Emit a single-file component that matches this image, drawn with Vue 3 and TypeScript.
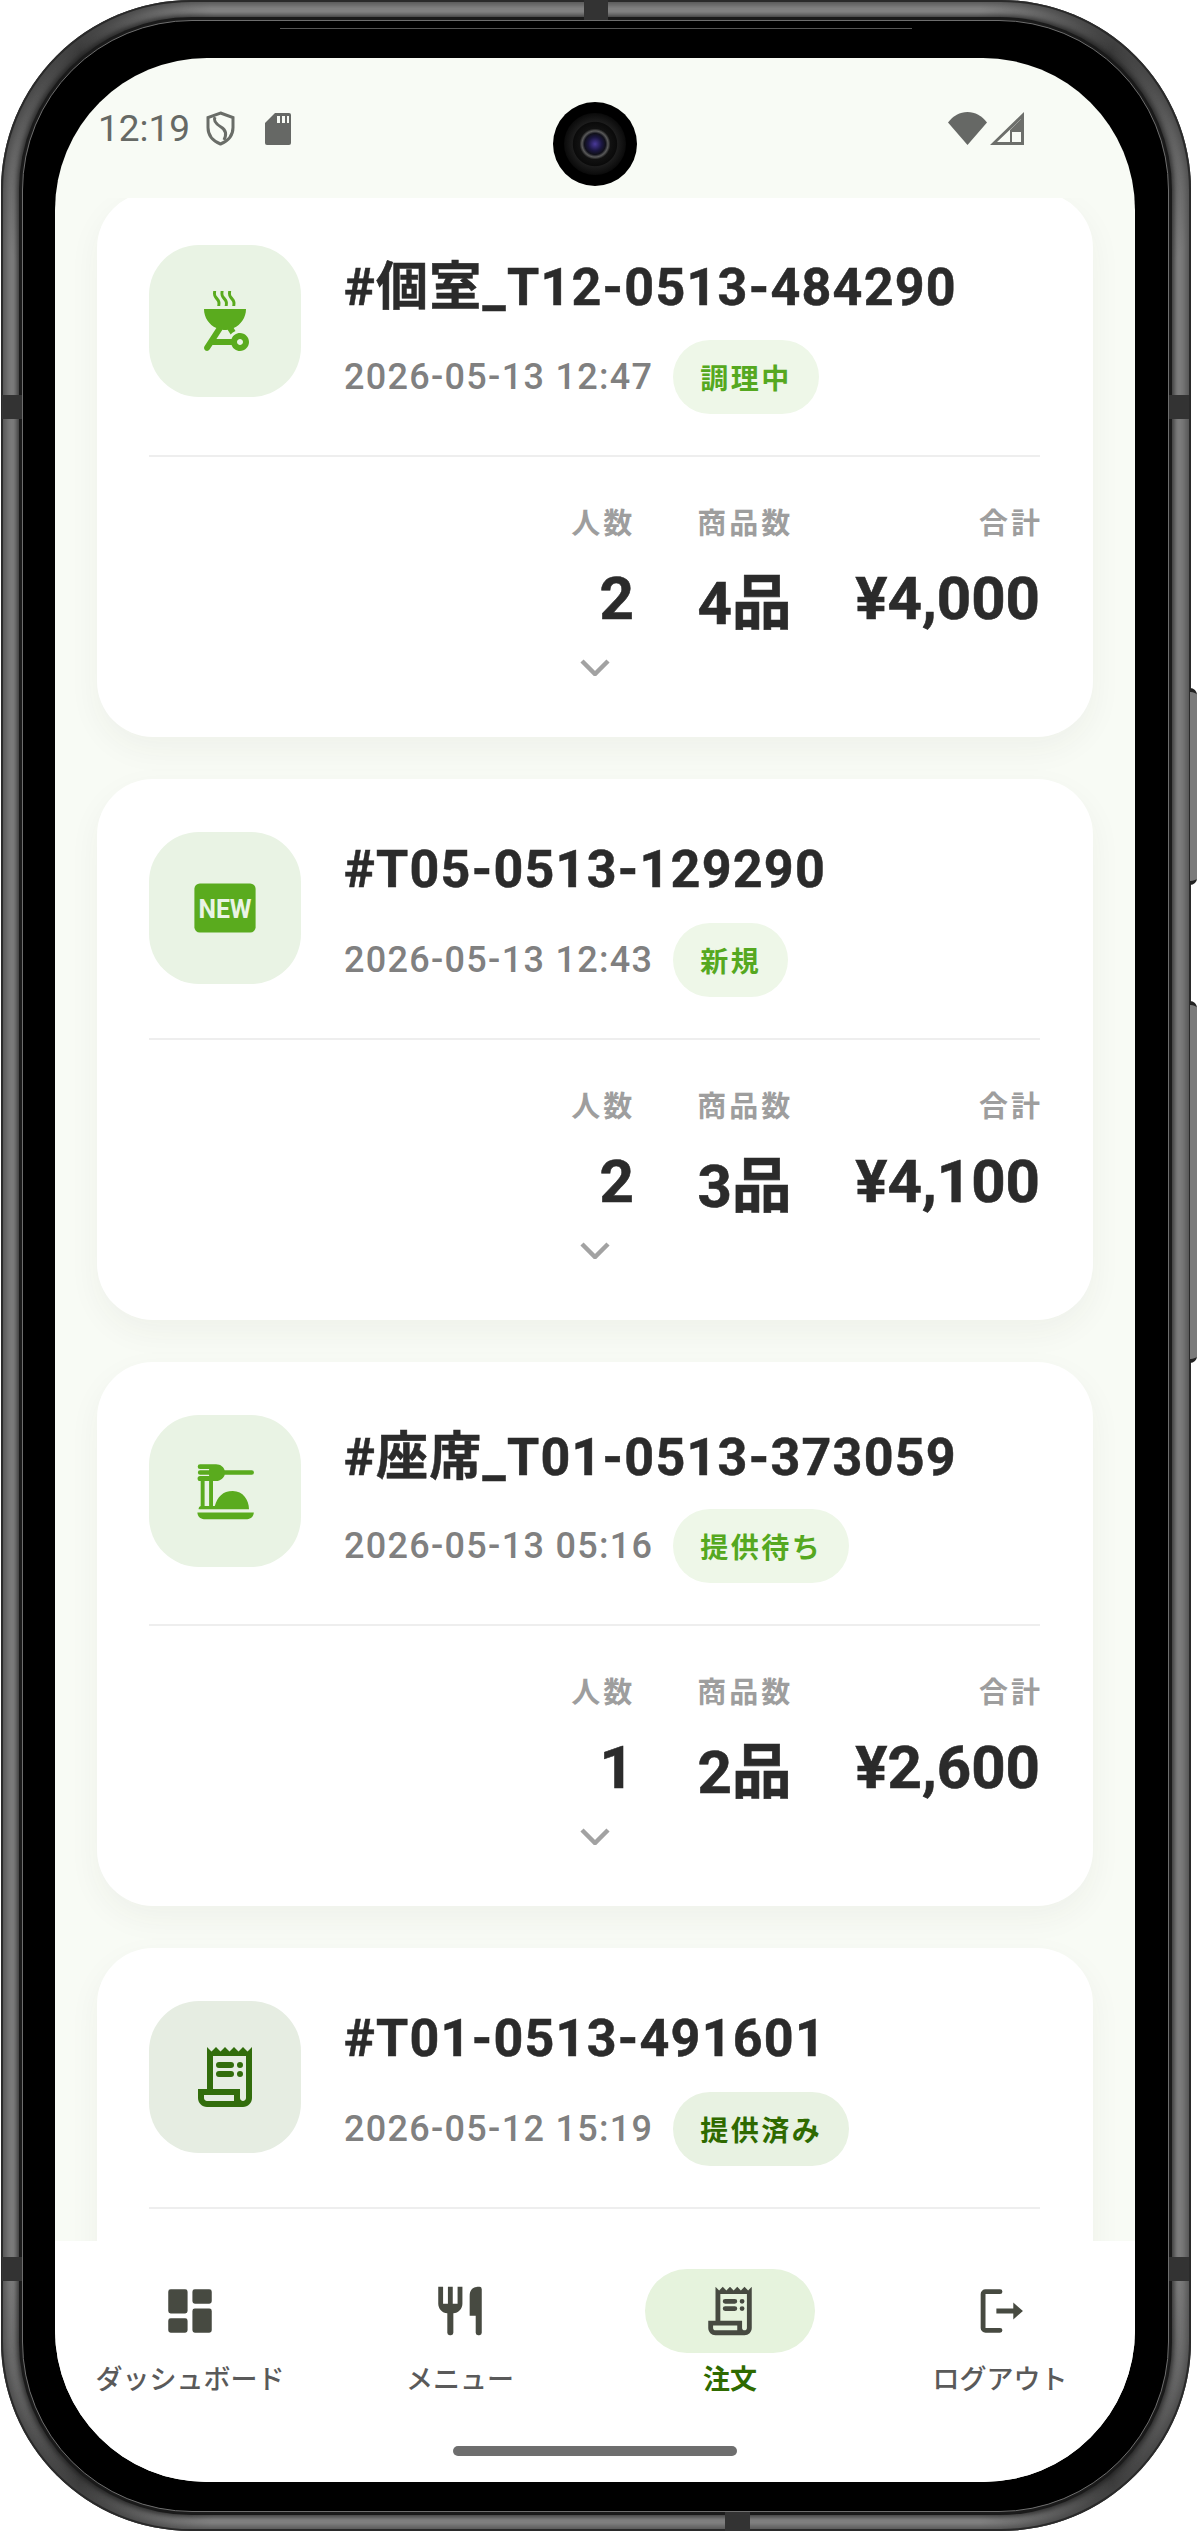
<template>
  <div class="device">
    <div class="side-btn btn-top"></div>
    <div class="side-btn btn-bottom"></div>
    <div class="mark mark-top"></div>
    <div class="mark mark-bottom"></div>
    <div class="mark mark-l1"></div>
    <div class="mark mark-l2"></div>
    <div class="mark mark-r1"></div>
    <div class="mark mark-r2"></div>
    <div class="speaker"></div>

    <div class="frame">
      <div class="bezel">
        <div class="screen">
          <header class="status">
            <div class="status-left">
              <span class="clock">12:19</span>
              <svg class="shield" viewBox="0 0 29 35">
                <path d="M14.5 2 27 6.5v10c0 8-5 13.500-12.500 16.500C7 30 2 24.500 2 16.500v-10z" fill="none" stroke="#6a6d68" stroke-width="3" />
                <path d="M9 6c-2 4 1 7 6 10s6 7 3 13" fill="none" stroke="#6a6d68" stroke-width="3" />
              </svg>
              <svg class="sd" viewBox="0 0 26 32">
                <path d="M10 0h14a2 2 0 0 1 2 2v28a2 2 0 0 1-2 2H2a2 2 0 0 1-2-2V10z" fill="#666865" />
                <path d="M12 3h3v7h-3zM17 3h3v7h-3zM22 3h2v7h-2z" fill="#f8fbf5" />
              </svg>
            </div>
            <div class="camera"><div class="lens"></div></div>
            <div class="status-right">
              <svg class="wifi" viewBox="0 0 39 33">
                <path d="M0 10.500C5 4 12 0 19.500 0S34 4 39 10.500L19.500 33z" fill="#666865" />
              </svg>
              <svg class="signal" viewBox="0 0 34 33">
                <path d="M34 0v33H0zM31 7 7 30h24z" fill="#6d6f6b" />
                <path d="M20 18v12h11V7z" fill="#6d6f6b" />
                <path d="M22 20h9v10h-9z" fill="#f8fbf5" />
              </svg>
            </div>
          </header>

          <main class="list">
            <div class="list-inner">
              <section v-for="o in orders" :key="o.id" class="card" :class="{ tall: o.tall }">
                <div class="card-head">
                  <div class="icon-box" :class="{ served: o.served }">
                    <svg class="order-icon" viewBox="0 0 24 24">
                      <template v-if="o.icon === 'new'">
                        <rect x="1.800" y="3.800" width="20.400" height="16.400" rx="1.800" fill="currentColor" />
                        <text x="12" y="15.300" text-anchor="middle" textLength="17.700" lengthAdjust="spacingAndGlyphs" class="new-text">NEW</text>
                      </template>
                      <path v-else :d="icons[o.icon]" fill="currentColor" fill-rule="evenodd" />
                    </svg>
                  </div>
                  <div class="head-text">
                    <h2 class="title">{{ o.id }}</h2>
                    <div class="meta">
                      <span class="date">{{ o.date }}</span>
                      <span class="chip" :class="{ served: o.served }">{{ o.status }}</span>
                    </div>
                  </div>
                </div>
                <div class="divider"></div>
                <template v-if="o.total">
                  <div class="stats">
                    <div class="stat">
                      <span class="label">人数</span>
                      <span class="value">{{ o.people }}</span>
                    </div>
                    <div class="stat">
                      <span class="label">商品数</span>
                      <span class="value count">{{ o.items }}</span>
                    </div>
                    <div class="stat">
                      <span class="label">合計</span>
                      <span class="value">{{ o.total }}</span>
                    </div>
                  </div>
                  <svg class="chevron" viewBox="0 0 30 17">
                    <path d="M2 2l13 13L28 2" fill="none" stroke="#a2a2a2" stroke-width="4.500" />
                  </svg>
                </template>
              </section>
            </div>
          </main>

          <nav class="nav">
            <div v-for="n in navItems" :key="n.label" class="nav-item" :class="{ active: n.active }">
              <div class="nav-pill">
                <svg class="nav-icon" viewBox="0 0 24 24">
                  <path v-if="n.icon !== 'logout'" :d="icons[n.icon]" fill="currentColor" fill-rule="evenodd" />
                  <template v-else>
                    <path d="M12 4H6a1 1 0 0 0-1 1v14a1 1 0 0 0 1 1h6" fill="none" stroke="currentColor" stroke-width="2" stroke-linecap="round" />
                    <path d="M10.500 11h7V8.500l4 3.500-4 3.500V13h-7z" fill="currentColor" />
                  </template>
                </svg>
              </div>
              <span class="nav-label">{{ n.label }}</span>
            </div>
            <div class="home-bar"></div>
          </nav>
        </div>
      </div>
    </div>
  </div>
</template>

<script setup lang="ts">
interface Order {
  id: string
  date: string
  status: string
  icon: string
  people?: number
  items?: string
  total?: string
  tall?: boolean
  served?: boolean
}

const icons: Record<string, string> = {
  grill:
    'M17 22c1.66 0 3-1.34 3-3s-1.34-3-3-3c-1.3 0-2.4.84-2.82 2H9.14l1.99-3.06c.29.04.58.06.87.06s.58-.02.87-.06l1.02 1.57c.42-.53.96-.95 1.6-1.21l-.6-.93C17.31 13.27 19 10.84 19 8H5c0 2.84 1.69 5.27 4.12 6.37l-3.95 6.08c-.3.46-.17 1.08.29 1.38.46.3 1.08.17 1.38-.29l1-1.54h6.35c.41 1.16 1.51 2 2.81 2zm0-4c.55 0 1 .45 1 1s-.45 1-1 1-1-.45-1-1 .45-1 1-1zM9.41 7h1c.15-1.15.23-1.64-.89-2.96-.42-.5-.68-.77-.46-2.04h-.99c-.21 1.11.03 2.05.89 2.96.22.24.79.67.45 2.04zm2.48 0h1c.15-1.15.23-1.64-.89-2.96-.42-.5-.68-.78-.46-2.04h-.99c-.21 1.11.03 2.05.89 2.96.23.24.8.67.45 2.04zm2.52 0h1c.15-1.15.23-1.64-.89-2.96-.42-.5-.68-.78-.46-2.04h-.99c-.21 1.11.03 2.05.89 2.96.22.24.79.67.45 2.04z',
  dinner:
    'M2.800 19.200H21.600c0 1.200-1 2.200-2.200 2.200H5c-1.200 0-2.200-1-2.200-2.200zM3.200 18.100c0-.6.3-1 .7-1.100V8.700h1.300V17h1.500V8.700H8v8.300h.6C9.500 14 11.200 12 14.600 12 18 12 20 15 20 18.100zM3.700 3.100H9c1.600 0 2.600 1 2.900 2h9a.75.75 0 0 1 0 1.500h-9c-.3 1-1.300 2.100-2.900 2.100H3.700a.8.8 0 0 1 0-1.700H6.700V6.600H3.700a.75.75 0 0 1 0-1.500H6.700V4.700H3.700a.8.8 0 0 1 0-1.600z',
  receipt:
    'M19.500 3.500 18 2l-1.500 1.500L15 2l-1.500 1.500L12 2l-1.500 1.500L9 2 7.500 3.500 6 2v14H3v3c0 1.660 1.340 3 3 3h12c1.660 0 3-1.340 3-3V2zM15 20H6c-.55 0-1-.45-1-1v-1h10zM19 19c0 .55-.45 1-1 1s-1-.45-1-1v-3H8V5h11zM10 7h4a1 1 0 0 1 0 2h-4a1 1 0 0 1 0-2zM10 10h4a1 1 0 0 1 0 2h-4a1 1 0 0 1 0-2zM17 7a1 1 0 1 1 0 2 1 1 0 0 1 0-2zM17 10a1 1 0 1 1 0 2 1 1 0 0 1 0-2z',
  dashboard:
    'M4 3h6a1 1 0 0 1 1 1v8a1 1 0 0 1-1 1H4a1 1 0 0 1-1-1V4a1 1 0 0 1 1-1zM4 15h6a1 1 0 0 1 1 1v4a1 1 0 0 1-1 1H4a1 1 0 0 1-1-1v-4a1 1 0 0 1 1-1zM14 3h6a1 1 0 0 1 1 1v4a1 1 0 0 1-1 1h-6a1 1 0 0 1-1-1V4a1 1 0 0 1 1-1zM14 11h6a1 1 0 0 1 1 1v8a1 1 0 0 1-1 1h-6a1 1 0 0 1-1-1v-8a1 1 0 0 1 1-1z',
  menu:
    'M11 9H9V2H7v7H5V2H3v7c0 2.120 1.660 3.840 3.750 3.970V21a1 1 0 0 0 1 1h.5a1 1 0 0 0 1-1v-8.030C11.340 12.840 13 11.120 13 9V2h-2zM16 6v8h2.500v7a1 1 0 0 0 1 1h.5a1 1 0 0 0 1-1V3a1 1 0 0 0-1-1c-2.760 0-4 1.240-4 4z',
}

const orders: Order[] = [
  { id: '#個室_T12-0513-484290', date: '2026-05-13 12:47', status: '調理中', icon: 'grill', people: 2, items: '4品', total: '¥4,000', tall: true },
  { id: '#T05-0513-129290', date: '2026-05-13 12:43', status: '新規', icon: 'new', people: 2, items: '3品', total: '¥4,100' },
  { id: '#座席_T01-0513-373059', date: '2026-05-13 05:16', status: '提供待ち', icon: 'dinner', people: 1, items: '2品', total: '¥2,600', tall: true },
  { id: '#T01-0513-491601', date: '2026-05-12 15:19', status: '提供済み', icon: 'receipt', served: true },
]

const navItems = [
  { label: 'ダッシュボード', icon: 'dashboard' },
  { label: 'メニュー', icon: 'menu' },
  { label: '注文', icon: 'receipt', active: true },
  { label: 'ログアウト', icon: 'logout' },
]
</script>

<style>
body {
  background: #fff;
}
</style>

<style scoped>
.device {
  position: relative;
  width: 1198px;
  height: 2531px;
  font-family: Roboto, "Noto Sans CJK JP", sans-serif;
  overflow: hidden;
}

.frame {
  box-sizing: border-box;
  width: 1190px;
  height: 2531px;
  margin-left: 1px;
  padding: 20px 22px 19px 21px;
  border-radius: 190px;
  background: conic-gradient(#8a8a8a 0 17deg, #3c3c3c 23deg, #7f7f7f 30deg 150deg, #3c3c3c 157deg, #8a8a8a 163deg 197deg, #3c3c3c 203deg, #7f7f7f 210deg 330deg, #3c3c3c 337deg, #8a8a8a 343deg);
  box-shadow: inset 0 0 0 2px #2a2a2a, inset 0 0 8px 4px #444;
}

.bezel {
  box-sizing: border-box;
  height: 100%;
  padding: 37px 33px 29px 32px;
  border-radius: 170px;
  background: #000;
  border: 1px solid #6e6e6e;
  box-shadow: 0 0 0 3px #1a1a1a, 0 0 5px 5px rgba(20, 20, 20, 0.7);
}

.screen {
  display: flex;
  flex-direction: column;
  height: 100%;
  overflow: hidden;
  border-radius: 152px;
  background: #f8fbf5;
}

.side-btn {
  position: absolute;
  left: 1190px;
  width: 7px;
  background: #7b7b7b;
  border-radius: 0 7px 7px 0;
  border-top: 4px solid #222;
  border-bottom: 4px solid #222;
  box-sizing: border-box;
}

.btn-top {
  top: 688px;
  height: 197px;
}

.btn-bottom {
  top: 1001px;
  height: 362px;
}

.mark {
  position: absolute;
  z-index: 2;
  background: #333;
}

.mark-top {
  left: 584px;
  top: 0;
  width: 24px;
  height: 20px;
}

.mark-bottom {
  left: 725px;
  top: 2512px;
  width: 25px;
  height: 19px;
}

.mark-l1,
.mark-l2,
.mark-r1,
.mark-r2 {
  width: 20px;
  height: 24px;
}

.mark-l1,
.mark-l2 {
  left: 2px;
}

.mark-r1,
.mark-r2 {
  left: 1169px;
}

.mark-l1,
.mark-r1 {
  top: 395px;
}

.mark-l2,
.mark-r2 {
  top: 2257px;
}

.speaker {
  position: absolute;
  z-index: 2;
  left: 280px;
  top: 28px;
  width: 632px;
  height: 1px;
  background: #555;
}

.status {
  position: relative;
  flex: none;
  display: flex;
  justify-content: space-between;
  align-items: center;
  box-sizing: border-box;
  height: 140px;
  padding: 0 111px 0 43px;
}

.status-left {
  display: flex;
  align-items: center;
  margin-top: 1px;
}

.status-right {
  display: flex;
  align-items: center;
  gap: 3px;
  margin-top: 1px;
}

.clock {
  font-size: 37px;
  color: #666965;
}

.shield {
  width: 29px;
  height: 35px;
  margin-left: 16px;
}

.sd {
  width: 26px;
  height: 32px;
  margin-left: 30px;
}

.wifi {
  width: 39px;
  height: 33px;
}

.signal {
  width: 34px;
  height: 33px;
}

.camera {
  position: absolute;
  left: 498px;
  top: 44px;
  width: 84px;
  height: 84px;
  display: flex;
  align-items: center;
  justify-content: center;
  border-radius: 50%;
  background: #000;
}

.lens {
  width: 62px;
  height: 62px;
  border-radius: 50%;
  background: radial-gradient(circle closest-side, #4a3a9a 0, #1a1640 22%, #10101a 34%, #5a5a5a 42%, #111 50%, #0a0a0a 70%, #1c1c1c 73%, #0a0a0a 100%);
}

.list {
  flex: 1;
  min-height: 0;
  overflow: hidden;
  padding: 0 42px;
}

.list-inner {
  display: flex;
  flex-direction: column;
  gap: 42px;
  margin-top: -6px;
}

.card {
  box-sizing: border-box;
  min-height: 541px;
  padding: 53px 53px 0 52px;
  border-radius: 56px;
  background: #fff;
  box-shadow: 0 12px 32px rgba(50, 60, 40, 0.05);
}

.card.tall {
  min-height: 544.500px;
}

.card.tall .title {
  padding-top: 5px;
  margin-bottom: 15.500px;
}

.card-head {
  display: flex;
  gap: 43px;
}

.icon-box {
  flex: none;
  display: flex;
  align-items: center;
  justify-content: center;
  width: 152px;
  height: 152px;
  border-radius: 50px;
  background: #e9f3e4;
  color: #5aab1e;
}

.icon-box.served {
  background: #e6ede2;
  color: #326d0c;
}

.order-icon {
  width: 72px;
  height: 72px;
}

.new-text {
  font-family: Roboto, sans-serif;
  font-size: 8.500px;
  font-weight: 700;
  fill: #e9f3e4;
}

.head-text {
  min-width: 0;
  padding-top: 2px;
}

.title {
  margin: 0 0 17px;
  font-size: 52px;
  line-height: 72px;
  font-weight: 700;
  letter-spacing: 1.250px;
  -webkit-text-stroke: 0.5px #2b2b2b;
  color: #2b2b2b;
}

.meta {
  display: flex;
  align-items: center;
  gap: 20px;
}

.date {
  font-size: 36px;
  font-weight: 500;
  letter-spacing: 1.300px;
  color: #808080;
}

.chip {
  display: flex;
  align-items: center;
  height: 74px;
  padding: 0 27px;
  border-radius: 37px;
  background: #eef7e8;
  color: #55a820;
  font-size: 28px;
  font-weight: 700;
  letter-spacing: 2.500px;
}

.chip.served {
  background: #e8f2e2;
  color: #2f6a00;
}

.divider {
  height: 2px;
  margin-top: 41px;
  background: #eeeeee;
}

.stats {
  display: flex;
  justify-content: flex-end;
  gap: 65px;
  margin-top: 48px;
}

.stat {
  display: flex;
  flex-direction: column;
  align-items: flex-end;
}

.label {
  font-size: 29px;
  line-height: 38px;
  font-weight: 700;
  letter-spacing: 3px;
  margin-right: -3px;
  color: #9e9e9e;
}

.value {
  margin-top: 16px;
  margin-right: -1.500px;
  font-size: 60px;
  line-height: 80px;
  font-weight: 700;
  -webkit-text-stroke: 0.6px #2b2b2b;
  color: #2b2b2b;
}

.stat:last-child .value {
  margin-right: 0;
}

.value.count {
  margin-top: 21px;
  margin-bottom: -5px;
}

.chevron {
  display: block;
  width: 30px;
  height: 17px;
  margin: 20px auto 0;
}

.nav {
  position: relative;
  flex: none;
  display: grid;
  grid-template-columns: repeat(4, 1fr);
  box-sizing: border-box;
  height: 241px;
  padding-top: 28px;
  background: #fff;
}

.nav-item {
  display: flex;
  flex-direction: column;
  align-items: center;
  color: #474a41;
}

.nav-pill {
  display: flex;
  align-items: center;
  justify-content: center;
  width: 170px;
  height: 84px;
  border-radius: 42px;
}

.nav-item.active .nav-pill {
  background: #e6f3dd;
}

.nav-icon {
  width: 58px;
  height: 58px;
}

.nav-label {
  margin-top: 8px;
  font-size: 27px;
  line-height: 38px;
  font-weight: 500;
  color: #5a5a5a;
}

.nav-item.active .nav-label {
  font-weight: 700;
  color: #2f6a00;
}

.home-bar {
  position: absolute;
  left: 398px;
  top: 205px;
  width: 284px;
  height: 10px;
  border-radius: 5px;
  background: #6e6e6e;
}
</style>
